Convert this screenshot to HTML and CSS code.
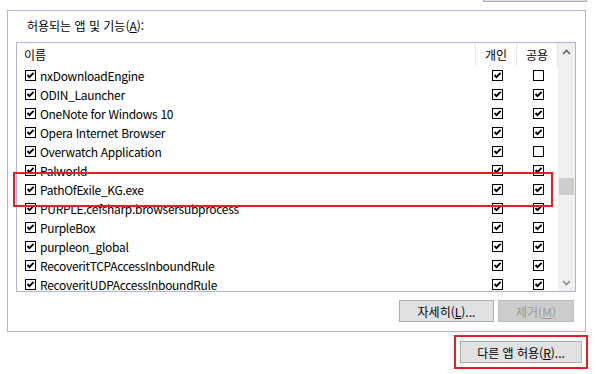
FILE: index.html
```html
<!DOCTYPE html>
<html lang="ko">
<head>
  <meta charset="UTF-8">
  <title>허용되는 앱</title>
  <link rel="stylesheet" href="styles.css">
</head>
<body>
  <svg width="0" height="0" style="position:absolute">
    <symbol id="on" viewBox="0 0 11 11">
      <rect x="0.5" y="0.5" width="10" height="10" fill="#fff" stroke="#000"/>
      <path d="M2.5 5 L4.5 7.2 L8.6 2.8" fill="none" stroke="#000" stroke-width="1.9"/>
    </symbol>
    <symbol id="off" viewBox="0 0 11 11">
      <rect x="0.5" y="0.5" width="10" height="10" fill="#fff" stroke="#000"/>
    </symbol>
  </svg>

  <div class="topbtn"></div>

  <div class="group">
    <div class="label">허용되는 앱 및 기능(<u>A</u>):</div>

    <div class="list">
      <div class="list-main">
        <div class="row head">
          <div class="name">이름</div>
          <div class="col">개인</div>
          <div class="col last">공용</div>
        </div>

        <div class="row"><div class="name"><svg class="cb"><use href="#on"/></svg>nxDownloadEngine</div><div class="col"><svg class="cb"><use href="#on"/></svg></div><div class="col"><svg class="cb"><use href="#off"/></svg></div></div>
        <div class="row"><div class="name"><svg class="cb"><use href="#on"/></svg>ODIN_Launcher</div><div class="col"><svg class="cb"><use href="#on"/></svg></div><div class="col"><svg class="cb"><use href="#on"/></svg></div></div>
        <div class="row"><div class="name"><svg class="cb"><use href="#on"/></svg>OneNote for Windows 10</div><div class="col"><svg class="cb"><use href="#on"/></svg></div><div class="col"><svg class="cb"><use href="#on"/></svg></div></div>
        <div class="row"><div class="name"><svg class="cb"><use href="#on"/></svg>Opera Internet Browser</div><div class="col"><svg class="cb"><use href="#on"/></svg></div><div class="col"><svg class="cb"><use href="#on"/></svg></div></div>
        <div class="row"><div class="name"><svg class="cb"><use href="#on"/></svg>Overwatch Application</div><div class="col"><svg class="cb"><use href="#on"/></svg></div><div class="col"><svg class="cb"><use href="#off"/></svg></div></div>
        <div class="row"><div class="name"><svg class="cb"><use href="#on"/></svg>Palworld</div><div class="col"><svg class="cb"><use href="#on"/></svg></div><div class="col"><svg class="cb"><use href="#on"/></svg></div></div>
        <div class="row"><div class="name"><svg class="cb"><use href="#on"/></svg>PathOfExile_KG.exe</div><div class="col"><svg class="cb"><use href="#on"/></svg></div><div class="col"><svg class="cb"><use href="#on"/></svg></div></div>
        <div class="row"><div class="name"><svg class="cb"><use href="#on"/></svg>PURPLE.cefsharp.browsersubprocess</div><div class="col"><svg class="cb"><use href="#on"/></svg></div><div class="col"><svg class="cb"><use href="#on"/></svg></div></div>
        <div class="row"><div class="name"><svg class="cb"><use href="#on"/></svg>PurpleBox</div><div class="col"><svg class="cb"><use href="#on"/></svg></div><div class="col"><svg class="cb"><use href="#on"/></svg></div></div>
        <div class="row"><div class="name"><svg class="cb"><use href="#on"/></svg>purpleon_global</div><div class="col"><svg class="cb"><use href="#on"/></svg></div><div class="col"><svg class="cb"><use href="#on"/></svg></div></div>
        <div class="row"><div class="name"><svg class="cb"><use href="#on"/></svg>RecoveritTCPAccessInboundRule</div><div class="col"><svg class="cb"><use href="#on"/></svg></div><div class="col"><svg class="cb"><use href="#on"/></svg></div></div>
        <div class="row"><div class="name"><svg class="cb"><use href="#on"/></svg>RecoveritUDPAccessInboundRule</div><div class="col"><svg class="cb"><use href="#on"/></svg></div><div class="col"><svg class="cb"><use href="#on"/></svg></div></div>
      </div>

      <div class="scrollbar">
        <div class="sb-btn">
          <svg width="9" height="6" viewBox="0 0 9 6"><path d="M1 5 L4.5 1.5 L8 5" fill="none" stroke="#606060" stroke-width="1.6"/></svg>
        </div>
        <div class="thumb"></div>
        <div class="sb-btn down">
          <svg width="9" height="6" viewBox="0 0 9 6"><path d="M1 1 L4.5 4.5 L8 1" fill="none" stroke="#8a8a8a" stroke-width="1.6"/></svg>
        </div>
      </div>
    </div>

    <div class="actions">
      <button class="btn details">자세히(<u>L</u>)...</button>
      <button class="btn remove" disabled>제거(<u>M</u>)</button>
    </div>

    <!-- 빨간 표시 -->
    <div class="mark"></div>
  </div>

  <div class="allow-box">
    <button class="btn allow">다른 앱 허용(<u>R</u>)...</button>
  </div>
</body>
</html>
```

FILE: styles.css
```css
body {
  margin: 0;
  background: #ffffff;
  color: #000000;
  font-family: "Noto Sans CJK KR", "Noto Sans", sans-serif;
  font-size: 12px;
}

.topbtn {
  margin-left: 483px;
  width: 102px;
  height: 1px;
  background: #e1e1e1;
  border: 1px solid #adadad;
  border-top: none;
}

.group {
  position: relative;
  margin: 8px 0 0 7px;
  width: 579px;
  border: 1px solid #b0b3d8;
  padding: 7px 9px 9px 8px;
  box-sizing: border-box;
  height: 322px;
}

.label {
  padding-left: 11px;
  line-height: 16px;
  height: 16px;
}

.list {
  display: flex;
  margin-top: 8px;
  height: 250px;
  border: 1px solid #b0b3d8;
  box-sizing: border-box;
  overflow: hidden;
}

.list-main {
  flex: 1;
  overflow: hidden;
}

.row {
  display: grid;
  grid-template-columns: 1fr 41px 41px;
  height: 19px;
  align-items: center;
  padding-right: 1px;
}

.row.head {
  height: 23px;
  align-items: stretch;
}

.head .name,
.head .col {
  display: flex;
  align-items: center;
}

.head .name { padding-left: 7px; letter-spacing: 0; }

.head .col {
  justify-content: center;
  border-left: 1px solid #e5e5e5;
  padding-left: 0;
}

.head .col.last { border-right: 1px solid #e5e5e5; margin-right: -1px; }

.name {
  display: flex;
  align-items: center;
  padding-left: 8px;
  white-space: nowrap;
  line-height: 18px;
  letter-spacing: -0.3px;
}

.name .cb { margin-right: 4px; }

.col {
  display: flex;
  justify-content: center;
  padding-left: 4px;
}

.cb {
  width: 11px;
  height: 11px;
  flex: none;
  display: block;
}

.scrollbar {
  width: 17px;
  background: #f0f0f0;
  display: flex;
  flex-direction: column;
}

.sb-btn {
  height: 17px;
  display: flex;
  align-items: center;
  justify-content: center;
}

.sb-btn.down { margin-top: auto; }

.thumb {
  margin: 118px 1px 0 1px;
  height: 17px;
  background: #cdcdcd;
}

.actions {
  display: flex;
  justify-content: flex-end;
  gap: 4px;
  margin-top: 8px;
  padding-right: 2px;
}

.btn {
  height: 22px;
  box-sizing: border-box;
  border: 1px solid #adadad;
  background: #e1e1e1;
  color: #000000;
  font-family: inherit;
  font-size: 12px;
  padding: 0;
  margin: 0;
}

.details { width: 95px; }

.remove {
  width: 76px;
  background: #cccccc;
  border-color: #bfbfbf;
  color: #9a9a9a;
}

.mark {
  position: absolute;
  left: 5px;
  top: 161px;
  width: 540px;
  height: 35px;
  border: 2px solid #e81c24;
  box-sizing: border-box;
}

.allow-box {
  margin: 3px 0 0 454px;
  width: 134px;
  padding: 4px;
  border: 2px solid #e81c24;
  box-sizing: border-box;
}

.allow { width: 122px; }
```
